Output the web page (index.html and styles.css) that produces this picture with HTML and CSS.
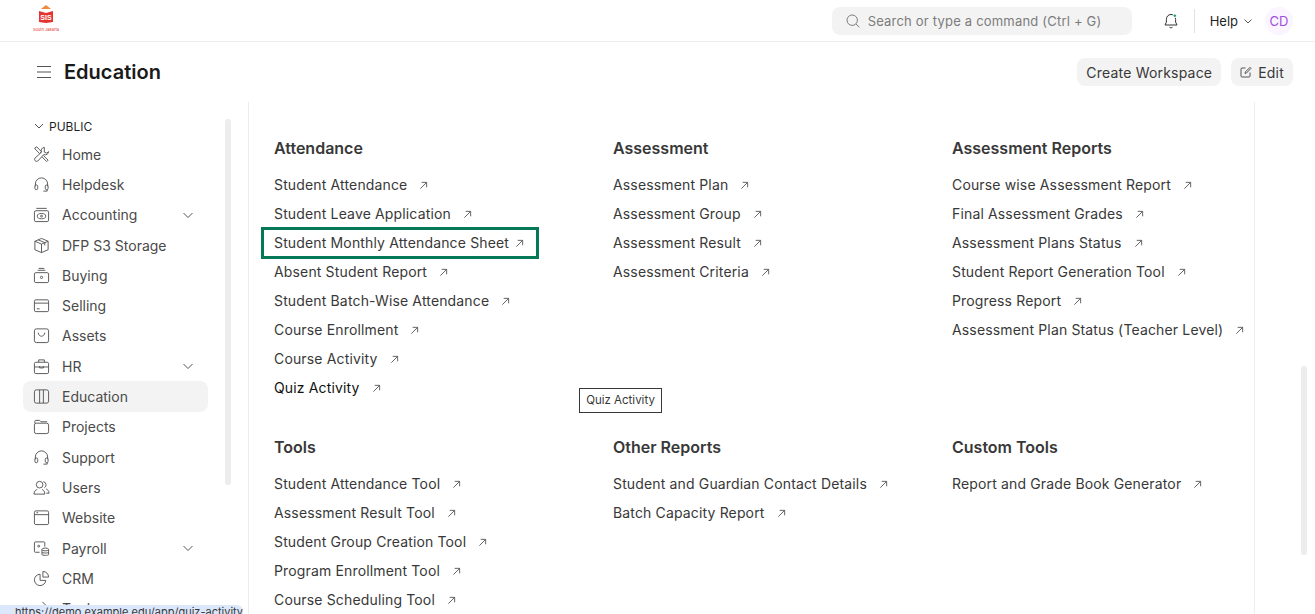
FILE: index.html
```html
<!DOCTYPE html>
<html lang="en">
<head>
    <meta charset="UTF-8">
    <meta name="viewport" content="width=device-width, initial-scale=1.0">
    <title>Education</title>
    <link rel="stylesheet" href="styles.css">
</head>
<body>

    <!-- Top navbar -->
    <header class="navbar">
        <div class="logo">
            <svg width="26" height="22" viewBox="0 0 26 22">
                <path d="M13 0 L18 4 L8 4 Z" fill="#f08a3c"/>
                <path d="M6 6 L13 8 L20 6 V17 L13 18 L6 17 Z" fill="#e3342f"/>
                <text x="13" y="15" class="logo-mark">SIS</text>
            </svg>
            <span class="logo-caption">South Jakarta</span>
        </div>
        <div class="navbar-right">
            <div class="search">
                <svg class="ico" width="16" height="16" viewBox="0 0 16 16"><circle cx="7.2" cy="7.2" r="5.2"/><path d="M11 11l3.4 3.4"/></svg>
                <span>Search or type a command (Ctrl + G)</span>
            </div>
            <svg class="ico bell" width="18" height="18" viewBox="0 0 18 18">
                <path d="M9 2.5c-3 0-4.6 2.3-4.6 5v2.6L3 13h12l-1.4-2.9V7.500c0-2.700-1.600-5-4.600-5z"/>
                <path d="M7.500 15.200c.6.800 2.400.800 3 0"/>
                <circle class="bell-dot" cx="12.800" cy="3.700" r="1.800"/>
            </svg>
            <div class="nav-divider"></div>
            <div class="help">Help
                <svg class="ico" width="10" height="10" viewBox="0 0 10 10"><path d="M1.500 3.500L5 7l3.500-3.500"/></svg>
            </div>
            <div class="avatar">CD</div>
        </div>
    </header>

    <!-- Page title row -->
    <div class="page-head">
        <div class="page-title">
            <svg class="ico menu" width="16" height="14" viewBox="0 0 16 14"><path d="M1 1.500h14M1 7h14M1 12.500h14"/></svg>
            <h1>Education</h1>
        </div>
        <div class="page-actions">
            <button class="btn">Create Workspace</button>
            <button class="btn">
                <svg class="ico" width="12" height="12" viewBox="0 0 12 12"><path d="M10 6.500V10a1 1 0 0 1-1 1H2a1 1 0 0 1-1-1V3a1 1 0 0 1 1-1h3.500M5 7.500l.3-1.500L10 1.300 11 2.300 6.300 7.200z"/></svg>
                Edit
            </button>
        </div>
    </div>

    <div class="layout">
        <!-- Sidebar -->
        <aside class="sidebar">
            <div class="side-label">
                <svg class="ico" width="10" height="10" viewBox="0 0 10 10"><path d="M1 3l4 4 4-4"/></svg>
                PUBLIC
            </div>
            <ul class="side-list">
                <li class="side-item"><svg class="ico" viewBox="0 0 18 18"><path d="M2 2l2-1 5 5-2 2-5-5zM11 10l5 5-1.500 1.500-5-5M12 1.500a3.500 3.500 0 0 0-3 5L2 13a2.200 2.200 0 0 0 3 3l6.500-7a3.500 3.500 0 0 0 5-3l-2 1.500-2.500-1 .0-2.500z"/></svg>Home</li>
                <li class="side-item"><svg class="ico" viewBox="0 0 18 18"><path d="M2.500 11V8.500a6.500 6.500 0 0 1 13 0V11M2 11a1.500 1.500 0 0 1 3 0v2a1.500 1.500 0 0 1-3 0zM13 11a1.500 1.500 0 0 1 3 0v2a1.500 1.500 0 0 1-3 0zM15 14.500V16h-4"/></svg>Helpdesk</li>
                <li class="side-item"><svg class="ico" viewBox="0 0 18 18"><rect x="1.500" y="5" width="15" height="11.500" rx="1.500"/><path d="M3.500 2.500h11"/><ellipse cx="9" cy="10.700" rx="4.500" ry="2.800"/><circle cx="9" cy="10.700" r="1"/></svg>Accounting<svg class="ico caret" viewBox="0 0 12 12"><path d="M1.500 4L6 8.500 10.500 4"/></svg></li>
                <li class="side-item"><svg class="ico" viewBox="0 0 18 18"><path d="M9 1.500l7 3v9l-7 3-7-3v-9zM2 4.500l7 3 7-3M9 7.500v9M5.500 3l7 3v3"/></svg>DFP S3 Storage</li>
                <li class="side-item"><svg class="ico" viewBox="0 0 18 18"><rect x="1.500" y="6" width="15" height="10.500" rx="1.500"/><path d="M5 3.500h8M6 1.500h6"/><circle cx="9" cy="11" r="1.200"/></svg>Buying</li>
                <li class="side-item"><svg class="ico" viewBox="0 0 18 18"><rect x="1.500" y="3" width="15" height="12.500" rx="1.500"/><path d="M1.500 6.500h15M4 12.500h3"/></svg>Selling</li>
                <li class="side-item"><svg class="ico" viewBox="0 0 18 18"><rect x="1.500" y="2" width="15" height="14.500" rx="2"/><path d="M5.500 6c.5 5 6.500 5 7 0"/></svg>Assets</li>
                <li class="side-item"><svg class="ico" viewBox="0 0 18 18"><rect x="1.500" y="4.500" width="15" height="12" rx="1.500"/><path d="M6 4.500V2h6v2.500M1.500 9.500h15M7 8.500v2h4v-2"/></svg>HR<svg class="ico caret" viewBox="0 0 12 12"><path d="M1.500 4L6 8.500 10.500 4"/></svg></li>
                <li class="side-item active"><svg class="ico" viewBox="0 0 18 18"><rect x="1.500" y="2" width="15" height="14" rx="2"/><path d="M7 2v14M11 2v14"/></svg>Education</li>
                <li class="side-item"><svg class="ico" viewBox="0 0 18 18"><rect x="1.500" y="5.500" width="15" height="11" rx="2"/><path d="M2 5.500V3.500a1 1 0 0 1 1-1h4l1.500 1.500h6.500"/></svg>Projects</li>
                <li class="side-item"><svg class="ico" viewBox="0 0 18 18"><path d="M2.500 11V8.500a6.500 6.500 0 0 1 13 0V11M2 11a1.500 1.500 0 0 1 3 0v2a1.500 1.500 0 0 1-3 0zM13 11a1.500 1.500 0 0 1 3 0v2a1.500 1.500 0 0 1-3 0zM15 14.500V16h-4"/></svg>Support</li>
                <li class="side-item"><svg class="ico" viewBox="0 0 18 18"><circle cx="7" cy="6" r="3.500"/><path d="M1 16c0-3.500 2.500-4.500 3.500-5M9.500 11c1 .5 3 1.500 3 5H1M11 2.800a3.500 3.500 0 0 1 1 6.500M14 10.500c1.500.8 3 2 3 4.500h-3"/></svg>Users</li>
                <li class="side-item"><svg class="ico" viewBox="0 0 18 18"><rect x="1.500" y="2" width="15" height="14.500" rx="1.500"/><path d="M1.500 6h15M3.500 4h2"/></svg>Website</li>
                <li class="side-item"><svg class="ico" viewBox="0 0 18 18"><path d="M7 13H2.500a1 1 0 0 1-1-1V3a1 1 0 0 1 1-1h9a1 1 0 0 1 1 1v4"/><circle cx="6" cy="6.500" r="1"/><ellipse cx="13" cy="10" rx="3.500" ry="1.500"/><path d="M9.500 10v5.500c0 1 7 1 7 0V10M9.500 13c0 1 7 1 7 0"/></svg>Payroll<svg class="ico caret" viewBox="0 0 12 12"><path d="M1.500 4L6 8.500 10.500 4"/></svg></li>
                <li class="side-item"><svg class="ico" viewBox="0 0 18 18"><path d="M7.500 4.500a6 6 0 1 0 6 6.500h-6zM10.500 1.500v6h6a6 6 0 0 0-6-6z"/></svg>CRM</li>
                <li class="side-item"><svg class="ico" viewBox="0 0 18 18"><path d="M2 16L12 6M10 2l6 6"/></svg>Tools</li>
            </ul>
            <div class="side-track"></div>
            <div class="status-url">https://demo.example.edu/app/quiz-activity</div>
        </aside>

        <!-- Link cards -->
        <main class="content">
            <div class="card-grid">
                <section>
                    <h3>Attendance</h3>
                    <a class="link">Student Attendance<svg class="ico arrow" viewBox="0 0 10 10"><path d="M1.500 8.500l7-7M3 1.500h5.500V7"/></svg></a>
                    <a class="link">Student Leave Application<svg class="ico arrow" viewBox="0 0 10 10"><path d="M1.500 8.500l7-7M3 1.500h5.500V7"/></svg></a>
                    <a class="link boxed">Student Monthly Attendance Sheet<svg class="ico arrow" viewBox="0 0 10 10"><path d="M1.500 8.500l7-7M3 1.500h5.500V7"/></svg></a>
                    <a class="link">Absent Student Report<svg class="ico arrow" viewBox="0 0 10 10"><path d="M1.500 8.500l7-7M3 1.500h5.500V7"/></svg></a>
                    <a class="link">Student Batch-Wise Attendance<svg class="ico arrow" viewBox="0 0 10 10"><path d="M1.500 8.500l7-7M3 1.500h5.500V7"/></svg></a>
                    <a class="link">Course Enrollment<svg class="ico arrow" viewBox="0 0 10 10"><path d="M1.500 8.500l7-7M3 1.500h5.500V7"/></svg></a>
                    <a class="link">Course Activity<svg class="ico arrow" viewBox="0 0 10 10"><path d="M1.500 8.500l7-7M3 1.500h5.500V7"/></svg></a>
                    <a class="link hovered">Quiz Activity<svg class="ico arrow" viewBox="0 0 10 10"><path d="M1.500 8.500l7-7M3 1.500h5.500V7"/></svg></a>
                </section>
                <section>
                    <h3>Assessment</h3>
                    <a class="link">Assessment Plan<svg class="ico arrow" viewBox="0 0 10 10"><path d="M1.500 8.500l7-7M3 1.500h5.500V7"/></svg></a>
                    <a class="link">Assessment Group<svg class="ico arrow" viewBox="0 0 10 10"><path d="M1.500 8.500l7-7M3 1.500h5.500V7"/></svg></a>
                    <a class="link">Assessment Result<svg class="ico arrow" viewBox="0 0 10 10"><path d="M1.500 8.500l7-7M3 1.500h5.500V7"/></svg></a>
                    <a class="link">Assessment Criteria<svg class="ico arrow" viewBox="0 0 10 10"><path d="M1.500 8.500l7-7M3 1.500h5.500V7"/></svg></a>
                </section>
                <section>
                    <h3>Assessment Reports</h3>
                    <a class="link">Course wise Assessment Report<svg class="ico arrow" viewBox="0 0 10 10"><path d="M1.500 8.500l7-7M3 1.500h5.500V7"/></svg></a>
                    <a class="link">Final Assessment Grades<svg class="ico arrow" viewBox="0 0 10 10"><path d="M1.500 8.500l7-7M3 1.500h5.500V7"/></svg></a>
                    <a class="link">Assessment Plans Status<svg class="ico arrow" viewBox="0 0 10 10"><path d="M1.500 8.500l7-7M3 1.500h5.500V7"/></svg></a>
                    <a class="link">Student Report Generation Tool<svg class="ico arrow" viewBox="0 0 10 10"><path d="M1.500 8.500l7-7M3 1.500h5.500V7"/></svg></a>
                    <a class="link">Progress Report<svg class="ico arrow" viewBox="0 0 10 10"><path d="M1.500 8.500l7-7M3 1.500h5.500V7"/></svg></a>
                    <a class="link">Assessment Plan Status (Teacher Level)<svg class="ico arrow" viewBox="0 0 10 10"><path d="M1.500 8.500l7-7M3 1.500h5.500V7"/></svg></a>
                </section>
                <section>
                    <h3>Tools</h3>
                    <a class="link">Student Attendance Tool<svg class="ico arrow" viewBox="0 0 10 10"><path d="M1.500 8.500l7-7M3 1.500h5.500V7"/></svg></a>
                    <a class="link">Assessment Result Tool<svg class="ico arrow" viewBox="0 0 10 10"><path d="M1.500 8.500l7-7M3 1.500h5.500V7"/></svg></a>
                    <a class="link">Student Group Creation Tool<svg class="ico arrow" viewBox="0 0 10 10"><path d="M1.500 8.500l7-7M3 1.500h5.500V7"/></svg></a>
                    <a class="link">Program Enrollment Tool<svg class="ico arrow" viewBox="0 0 10 10"><path d="M1.500 8.500l7-7M3 1.500h5.500V7"/></svg></a>
                    <a class="link">Course Scheduling Tool<svg class="ico arrow" viewBox="0 0 10 10"><path d="M1.500 8.500l7-7M3 1.500h5.500V7"/></svg></a>
                </section>
                <section>
                    <h3>Other Reports</h3>
                    <a class="link">Student and Guardian Contact Details<svg class="ico arrow" viewBox="0 0 10 10"><path d="M1.500 8.500l7-7M3 1.500h5.500V7"/></svg></a>
                    <a class="link">Batch Capacity Report<svg class="ico arrow" viewBox="0 0 10 10"><path d="M1.500 8.500l7-7M3 1.500h5.500V7"/></svg></a>
                </section>
                <section>
                    <h3>Custom Tools</h3>
                    <a class="link">Report and Grade Book Generator<svg class="ico arrow" viewBox="0 0 10 10"><path d="M1.500 8.500l7-7M3 1.500h5.500V7"/></svg></a>
                </section>
            </div>
            <div class="tooltip">Quiz Activity</div>
        </main>

        <div class="page-track"></div>
    </div>

</body>
</html>
```

FILE: styles.css
```css
* {
    box-sizing: border-box;
}
html, body {
    height: 100%;
}
body {
    margin: 0;
    height: 614px;
    overflow: hidden;
    background-color: #fff;
    color: #383838;
    font-family: Inter, "Liberation Sans", sans-serif;
    font-size: 14px;
}
h1, h3 {
    margin: 0;
}
ul {
    list-style: none;
    margin: 0;
    padding: 0;
}
.ico {
    fill: none;
    stroke: #555;
    stroke-width: 1;
    flex: none;
}

/* Navbar */
.navbar {
    height: 42px;
    display: flex;
    justify-content: space-between;
    align-items: center;
    padding: 0 22px 0 34px;
    border-bottom: 1px solid #ededed;
}
.logo {
    width: 24px;
    display: flex;
    flex-direction: column;
    align-items: center;
    margin-top: -4px;
}
.logo-mark {
    font-family: "Liberation Sans", sans-serif;
    font-size: 7px;
    font-weight: 700;
    fill: #fff;
    text-anchor: middle;
}
.logo-caption {
    font-size: 4px;
    color: #e3342f;
    white-space: nowrap;
    line-height: 5px;
}
.navbar-right {
    display: flex;
    align-items: center;
}
.search {
    width: 300px;
    height: 28px;
    margin-right: 30px;
    padding: 0 13px;
    display: flex;
    align-items: center;
    gap: 7px;
    border-radius: 8px;
    background-color: #f3f3f3;
    color: #7c7c7c;
    font-size: 13px;
    letter-spacing: .2px;
}
.search .ico {
    stroke: #7c7c7c;
}
.bell {
    stroke: #333;
}
.bell-dot {
    fill: #28a06a;
    stroke: #fff;
}
.nav-divider {
    width: 1px;
    height: 24px;
    margin: 0 15px 0 14px;
    background-color: #e2e2e2;
}
.help {
    display: flex;
    align-items: center;
    gap: 5px;
    font-size: 13px;
    color: #1f1f1f;
}
.avatar {
    width: 28px;
    height: 28px;
    margin-left: 12px;
    border-radius: 50%;
    display: flex;
    align-items: center;
    justify-content: center;
    background-color: #faf5ff;
    color: #a24fe0;
    font-size: 13px;
}

/* Page head */
.page-head {
    height: 60px;
    display: flex;
    justify-content: space-between;
    align-items: center;
    padding: 0 22px 0 36px;
}
.page-title {
    display: flex;
    align-items: center;
    gap: 12px;
}
.menu {
    stroke-width: 1.2;
}
h1 {
    font-size: 20px;
    font-weight: 600;
    color: #1a1a1a;
}
.page-actions {
    display: flex;
    gap: 10px;
}
.btn {
    height: 28px;
    padding: 0 9px;
    display: flex;
    align-items: center;
    gap: 6px;
    border: none;
    border-radius: 8px;
    background-color: #f3f3f3;
    color: #383838;
    font-family: inherit;
    font-size: 14px;
    letter-spacing: .2px;
}

/* Main layout */
.layout {
    display: flex;
    height: 512px;
}
.sidebar {
    position: relative;
    width: 249px;
    flex: none;
    padding: 16px 0 0 23px;
    border-right: 1px solid #ededed;
    overflow: hidden;
}
.side-label {
    height: 16px;
    display: flex;
    align-items: center;
    gap: 5px;
    margin: 0 0 5px 11px;
    font-size: 12px;
    color: #1f1f1f;
}
.side-list {
    width: 185px;
}
.side-item {
    height: 30.300px;
    display: flex;
    align-items: center;
    gap: 12px;
    padding-left: 10px;
    border-radius: 8px;
    color: #4a4a4a;
}
.side-item .ico {
    width: 17px;
    height: 17px;
}
.side-item .caret {
    width: 12px;
    height: 12px;
    margin-left: auto;
    margin-right: 14px;
}
.side-item.active {
    background-color: #f3f3f3;
}
.side-track {
    position: absolute;
    top: 17px;
    left: 225px;
    width: 6px;
    height: 366px;
    border-radius: 3px;
    background-color: #ededed;
}
.status-url {
    position: absolute;
    left: 0;
    bottom: 0;
    width: 243px;
    height: 9px;
    padding-left: 15px;
    border-top-right-radius: 6px;
    background-color: #dbe7fb;
    font-size: 11px;
    line-height: 14px;
    overflow: hidden;
    white-space: nowrap;
}

/* Link cards */
.content {
    position: relative;
    width: 1006px;
    flex: none;
    padding: 35px 0 0 25px;
    border-right: 1px solid #ededed;
}
.card-grid {
    display: grid;
    grid-template-columns: repeat(3, 339px);
    grid-auto-rows: 298.500px;
}
.card-grid section {
    display: flex;
    flex-direction: column;
    align-items: flex-start;
}
h3 {
    font-size: 16px;
    font-weight: 600;
    line-height: 22px;
    color: #383838;
    margin-bottom: 11px;
}
.link {
    height: 29px;
    display: flex;
    align-items: center;
    letter-spacing: .15px;
    color: #383838;
}
.link .arrow {
    width: 9px;
    height: 9px;
    margin-left: 12px;
    margin-top: 2px;
}
.boxed {
    margin-left: -13px;
    padding: 0 12px;
    width: 278px;
    height: 32px;
    margin-top: -1.500px;
    margin-bottom: -1.500px;
    outline: 0;
    border: 3px solid #047857;
    padding-left: 10px;
    justify-content: space-between;
}
.boxed .arrow {
    margin-left: 0;
}
.hovered {
    color: #111;
}
.tooltip {
    position: absolute;
    top: 286px;
    left: 330px;
    width: 83px;
    height: 25px;
    border: 1px solid #383838;
    background-color: #fff;
    font-size: 11.500px;
    line-height: 23px;
    text-align: center;
}
.page-track {
    position: relative;
    flex: 1;
}
.page-track::after {
    content: "";
    position: absolute;
    top: 264px;
    left: 46px;
    width: 6px;
    height: 189px;
    border-radius: 3px;
    background-color: #ededed;
}
```
